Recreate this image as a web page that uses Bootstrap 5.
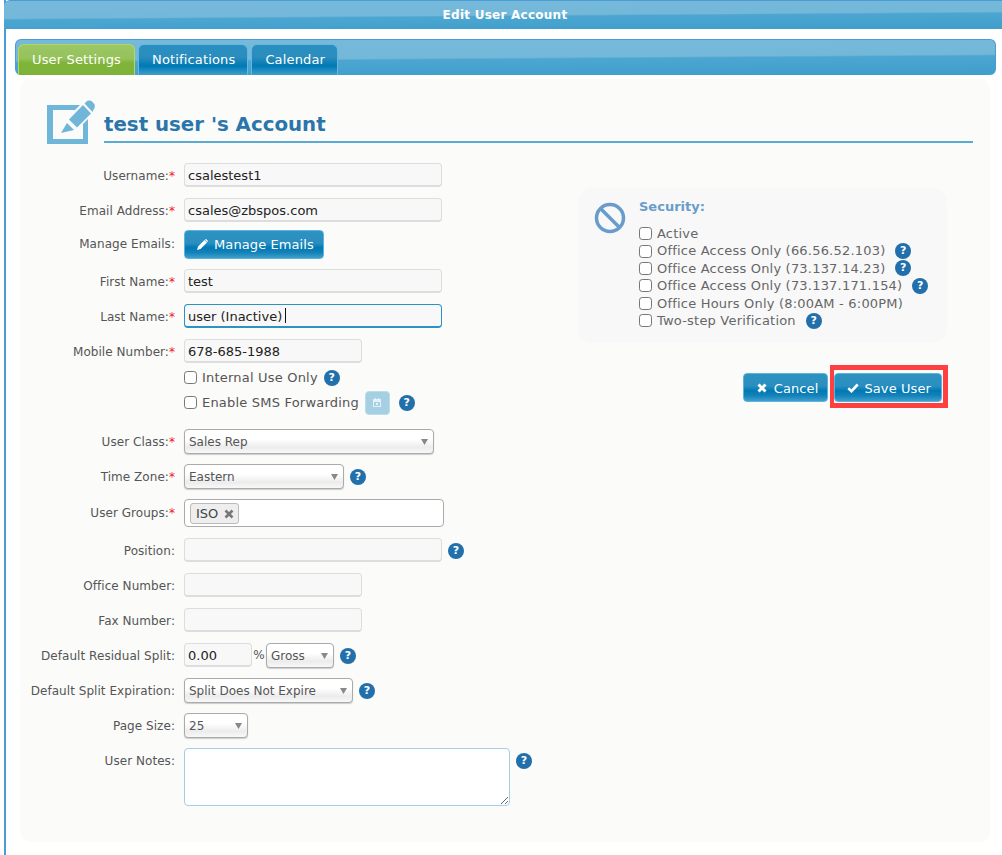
<!DOCTYPE html>
<html lang="en">

<head>
    <meta charset="UTF-8">
    <meta name="viewport" content="width=device-width, initial-scale=1.0">
    <title>Edit User Account</title>
    <link href="https://cdn.jsdelivr.net/npm/bootstrap@5.3.0/dist/css/bootstrap.min.css" rel="stylesheet">
    <style>
        body { font-family: "DejaVu Sans", Verdana, sans-serif; font-size: 12px; color: #555; background: #fff; overflow: hidden; }
        .page-frame { height: 855px; margin-left: 4px; border-left: 2px solid #4a9bd6; }
        .gloss-bar { background: linear-gradient(179.6deg, #76b9da 0, #74b8d9 50%, #4ca6d1 54%, #3f9ecb 100%); }
        .top-bar { height: 29px; margin-left: -2px; padding-left: 4px; border-top: 1px solid #4a9bd6; border-top-left-radius: 6px; color: #fff; font-weight: 700; font-size: 12px; letter-spacing: .25px; line-height: 28px; text-align: center; }
        .tab-bar { height: 36px; margin: 10px 6px 0 9px; border: 1px solid #4a9bd6; border-bottom: 0; border-radius: 6px; padding: 4px 0 0 2px; gap: 3px; }
        .tab-link { display: block; height: 31px; padding: 0 12px 0 13px; color: #fff; font-size: 13px; letter-spacing: .15px; line-height: 30px; border: 1px solid #62b8e2; border-bottom: 0; border-radius: 6px 6px 0 0; background: linear-gradient(#2a8fc0 0, #2a8dbe 40%, #0079b4 70%, #3f9fcc 100%); text-decoration: none; }
        .tab-link.is-current { padding: 0 13px; border-color: #b2d95c; background: linear-gradient(#9cc766 0, #95c25a 45%, #7fb439 60%, #7db338 100%); }
        .tab-link:hover { color: #fff; }
        .main-panel { height: 763px; margin: 4px 12px 0 14px; padding: 20px 17px 0 27px; background: #fbfbfa; border-radius: 10px; }
        .title-row { height: 45px; align-items: flex-end; }
        .title-row svg { flex: none; margin-right: 8px; }
        .title-text { flex: 1; height: 43px; margin: 0 0 1px; font-size: 19.8px; font-weight: 700; line-height: 49px; color: #2a76ab; border-bottom: 2px solid #5aabd3; }
        .form-cols { padding-top: 19px; margin-left: -27px; }
        .left-col { width: 558px; }
        .right-col { padding-top: 25px; }
        .field-row { display: flex; align-items: flex-start; margin-bottom: 11px; }
        .row-gap-8 { margin-bottom: 8px; }
        .row-gap-10 { margin-bottom: 10px; }
        .field-label { width: 155px; height: 24px; margin: 0 9px 0 0; text-align: right; letter-spacing: .05px; line-height: 26px; color: #555; white-space: nowrap; flex: none; }
        .label-tall { line-height: 28px; }
        .label-notes { line-height: 27px; }
        .req { color: #f0141e; }
        .text-box { height: 24px; padding: 1px 3px 0; font-size: 13px; color: #222; background: #f8f8f8; border: 1px solid #ddd; border-bottom-width: 2px; border-radius: 4px; }
        .text-box:focus { background: #f8f8f8; box-shadow: none; border-color: #ddd; }
        .text-box.is-active, .text-box.is-active:focus { border-color: #2a93c4; }
        .caret-wrap { position: relative; display: block; }
        .caret-mark { position: absolute; left: 101px; top: 4px; width: 1px; height: 15px; background: #111; }
        .w-258 { width: 258px; }
        .w-178 { width: 178px; }
        .w-68 { width: 68px; }
        .w-250 { width: 250px; }
        .w-160 { width: 160px; }
        .w-169 { width: 169px; }
        .w-64 { width: 64px; }
        .drop-box { height: 25px; padding: 0 16px 0 4px; font-size: 12px; color: #555; border: 1px solid #aaa; border-radius: 4px; box-shadow: 0 1px 1px #ccc; background-color: #fff; background-image: url("data:image/svg+xml,%3Csvg xmlns='http://www.w3.org/2000/svg' width='7' height='6'%3E%3Cpath d='M0 0h7L3.5 6z' fill='%23888'/%3E%3C/svg%3E"), linear-gradient(#fff 40%, #ececec 75%, #f8f8f8 100%); background-repeat: no-repeat; background-position: right 5px center, 0 0; background-size: 7px 6px, 100% 100%; }
        .drop-box:focus { border-color: #aaa; box-shadow: 0 1px 1px #ccc; }
        .help-dot { display: inline-block; flex: none; width: 16px; height: 16px; border-radius: 50%; background: #2270ab; color: #fff; font-size: 11px; font-weight: 700; line-height: 16px; text-align: center; }
        .help-gap { margin-left: 6px; }
        .help-gap-top { margin-left: 6px; margin-top: 5px; }
        .blue-btn { display: inline-flex; align-items: center; height: 29px; padding: 0 9px 0 12px; gap: 6px; color: #fff; font-size: 13px; letter-spacing: .1px; line-height: 1; border: 1px solid #5ab4dd; border-radius: 4px; background: linear-gradient(#2e92c1 0, #2a8ebf 45%, #0079b4 62%, #1482b9 80%, #3f9fcc 100%); }
        .blue-btn:hover { color: #fff; background: linear-gradient(#2e92c1 0, #2a8ebf 45%, #0079b4 62%, #1482b9 80%, #3f9fcc 100%); border-color: #5ab4dd; }
        .cancel-btn { padding-top: 1px; padding-left: 13px; gap: 7px; }
        .save-btn { padding-top: 1px; gap: 5px; padding-right: 10px; }
        .tick-box { width: 13px; height: 13px; margin: 0 5px 0 0; flex: none; border: 1px solid #767676; border-radius: 2.5px; float: none; }
        .tick-row { display: flex; align-items: center; font-size: 13px; letter-spacing: .2px; color: #555; }
        .under-fields { margin: -9px 0 14px 164px; }
        .under-fields .tick-row { height: 25px; }
        .sms-btn { display: inline-flex; align-items: center; justify-content: center; width: 25px; height: 24px; margin: 0 9px 0 6px; background: #a5cfe2; border: 1px solid #bcdcea; border-radius: 4px; }
        .percent-sign { width: 14px; line-height: 24px; text-align: center; }
        .group-box { width: 260px; height: 28px; padding: 3px 5px; background: #fff; border: 1px solid #aaa; border-radius: 4px; }
        .group-chip { display: inline-flex; align-items: center; height: 21px; padding: 0 4px 0 5px; gap: 6px; font-size: 13px; color: #444; background: #eee; border: 1px solid #bbb; border-radius: 3px; }
        .notes-box { width: 326px; height: 58px; background: #fff; border: 1px solid #a5cde6; border-radius: 4px; resize: both; }
        .notes-box:focus { border-color: #a5cde6; box-shadow: none; }
        .security-box { width: 369px; height: 155px; padding: 11px 0 0 16px; background: #f8f8f9; border-radius: 14px; }
        .security-box svg { flex: none; margin: 3px 13px 0 0; }
        .security-title { margin: 0 0 10px; font-size: 13px; font-weight: 700; line-height: 16px; color: #6a9ccb; }
        .security-list .tick-row { height: 17.5px; margin-top: -.1px; color: #666; }
        .security-list .help-dot { margin-left: 10px; }
        .action-row { width: 369px; padding: 30px 5px 0 0; gap: 6px; justify-content: flex-end; }
        .red-mark { position: relative; display: inline-flex; }
        .red-mark::after { content: ""; position: absolute; top: -8px; right: -6px; bottom: -6px; left: -4px; border: 5px solid #ff4040; border-left-width: 4px; pointer-events: none; }
    </style>
</head>

<body>
    <div class="page-frame">
        <div class="top-bar gloss-bar">Edit User Account</div>

        <div class="tab-bar gloss-bar d-flex">
            <a class="tab-link is-current" href="#">User Settings</a>
            <a class="tab-link" href="#">Notifications</a>
            <a class="tab-link" href="#">Calendar</a>
        </div>

        <div class="main-panel">
            <div class="title-row d-flex">
                <svg width="49" height="45" viewBox="0 0 49 45">
                    <path d="M0 6H33L28 11H6V40H36V25L41 20V45H0z" fill="#6fb6d8"/>
                    <path d="M14 34L20 24 27 31z" fill="#6fb6d8"/>
                    <path d="M22 20.500L36 6 44 14.500 30 28.500z" fill="#6fb6d8"/>
                    <path d="M37.500 4.500L39 3A4.500 4.500 0 0 1 45.500 3L46.500 4A4.500 4.500 0 0 1 46.500 10.500L45.500 13z" fill="#6fb6d8"/>
                </svg>
                <h2 class="title-text">test user 's Account</h2>
            </div>

            <form id="userForm" class="form-cols d-flex">
                <div class="left-col">
                    <div class="field-row">
                        <label class="field-label">Username:<span class="req">*</span></label>
                        <input type="text" class="form-control text-box w-258" value="csalestest1">
                    </div>
                    <div class="field-row row-gap-8">
                        <label class="field-label">Email Address:<span class="req">*</span></label>
                        <input type="text" class="form-control text-box w-258" value="csales@zbspos.com">
                    </div>
                    <div class="field-row row-gap-10">
                        <label class="field-label label-tall">Manage Emails:</label>
                        <button type="button" class="btn blue-btn">
                            <svg width="11" height="11" viewBox="0 0 11 11"><path d="M0 11l1-3.500L7.500 1 10 3.500 3.500 10zM8.300.4a1 1 0 0 1 1.300 0l1 1a1 1 0 0 1 0 1.300l-.4.400L7.900.8z" fill="#fff"/></svg>
                            Manage Emails
                        </button>
                    </div>
                    <div class="field-row">
                        <label class="field-label">First Name:<span class="req">*</span></label>
                        <input type="text" class="form-control text-box w-258" value="test">
                    </div>
                    <div class="field-row">
                        <label class="field-label">Last Name:<span class="req">*</span></label>
                        <span class="caret-wrap">
                            <input type="text" class="form-control text-box w-258 is-active" value="user (Inactive)">
                            <span class="caret-mark"></span>
                        </span>
                    </div>
                    <div class="field-row">
                        <label class="field-label">Mobile Number:<span class="req">*</span></label>
                        <input type="text" class="form-control text-box w-178" value="678-685-1988">
                    </div>
                    <div class="under-fields">
                        <div class="tick-row">
                            <input class="form-check-input tick-box" type="checkbox">
                            <span>Internal Use Only</span>
                            <span class="help-dot help-gap">?</span>
                        </div>
                        <div class="tick-row">
                            <input class="form-check-input tick-box" type="checkbox">
                            <span>Enable SMS Forwarding</span>
                            <span class="sms-btn">
                                <svg width="10" height="11" viewBox="0 0 10 11"><path d="M1 2h2V1h1v1h2V1h1v1h2v8H1zm1 3v4h6V5zm2 1h2v2H4z" fill="#e6f2f7" fill-rule="evenodd"/></svg>
                            </span>
                            <span class="help-dot">?</span>
                        </div>
                    </div>
                    <div class="field-row row-gap-10">
                        <label class="field-label">User Class:<span class="req">*</span></label>
                        <select class="form-select drop-box w-250"><option>Sales Rep</option></select>
                    </div>
                    <div class="field-row row-gap-10">
                        <label class="field-label">Time Zone:<span class="req">*</span></label>
                        <select class="form-select drop-box w-160"><option>Eastern</option></select>
                        <span class="help-dot help-gap-top">?</span>
                    </div>
                    <div class="field-row">
                        <label class="field-label label-tall">User Groups:<span class="req">*</span></label>
                        <div class="group-box d-flex">
                            <span class="group-chip">ISO
                                <svg width="10" height="10" viewBox="0 0 10 10"><path d="M1.500 1.500l7 7M8.500 1.500l-7 7" stroke="#777" stroke-width="2.600"/></svg>
                            </span>
                        </div>
                    </div>
                    <div class="field-row">
                        <label class="field-label">Position:</label>
                        <input type="text" class="form-control text-box w-258">
                        <span class="help-dot help-gap-top">?</span>
                    </div>
                    <div class="field-row">
                        <label class="field-label">Office Number:</label>
                        <input type="text" class="form-control text-box w-178">
                    </div>
                    <div class="field-row">
                        <label class="field-label">Fax Number:</label>
                        <input type="text" class="form-control text-box w-178">
                    </div>
                    <div class="field-row row-gap-10">
                        <label class="field-label">Default Residual Split:</label>
                        <input type="text" class="form-control text-box w-68" value="0.00">
                        <span class="percent-sign">%</span>
                        <select class="form-select drop-box w-68"><option>Gross</option></select>
                        <span class="help-dot help-gap-top">?</span>
                    </div>
                    <div class="field-row row-gap-10">
                        <label class="field-label">Default Split Expiration:</label>
                        <select class="form-select drop-box w-169"><option>Split Does Not Expire</option></select>
                        <span class="help-dot help-gap-top">?</span>
                    </div>
                    <div class="field-row row-gap-10">
                        <label class="field-label">Page Size:</label>
                        <select class="form-select drop-box w-64"><option>25</option></select>
                    </div>
                    <div class="field-row">
                        <label class="field-label label-notes">User Notes:</label>
                        <textarea class="form-control notes-box"></textarea>
                        <span class="help-dot help-gap-top">?</span>
                    </div>
                </div>

                <div class="right-col">
                    <div class="security-box d-flex">
                        <svg width="32" height="32" viewBox="0 0 32 32"><circle cx="16" cy="16" r="13.500" fill="none" stroke="#6a9ccb" stroke-width="3.500"/><path d="M6.500 6.500l19 19" stroke="#6a9ccb" stroke-width="3.500"/></svg>
                        <div class="security-list">
                            <div class="security-title">Security:</div>
                            <div class="tick-row"><input class="form-check-input tick-box" type="checkbox"><span>Active</span></div>
                            <div class="tick-row"><input class="form-check-input tick-box" type="checkbox"><span>Office Access Only (66.56.52.103)</span><span class="help-dot">?</span></div>
                            <div class="tick-row"><input class="form-check-input tick-box" type="checkbox"><span>Office Access Only (73.137.14.23)</span><span class="help-dot">?</span></div>
                            <div class="tick-row"><input class="form-check-input tick-box" type="checkbox"><span>Office Access Only (73.137.171.154)</span><span class="help-dot">?</span></div>
                            <div class="tick-row"><input class="form-check-input tick-box" type="checkbox"><span>Office Hours Only (8:00AM - 6:00PM)</span></div>
                            <div class="tick-row"><input class="form-check-input tick-box" type="checkbox"><span>Two-step Verification</span><span class="help-dot">?</span></div>
                        </div>
                    </div>
                    <div class="action-row d-flex">
                        <button type="button" class="btn blue-btn cancel-btn">
                            <svg width="10" height="10" viewBox="0 0 10 10"><path d="M1.500 1.500l7 7M8.500 1.500l-7 7" stroke="#fff" stroke-width="3"/></svg>
                            Cancel
                        </button>
                        <span class="red-mark">
                            <button type="submit" class="btn blue-btn save-btn">
                                <svg width="12" height="10" viewBox="0 0 12 10"><path d="M1.300 5.200l3.200 3L10.700 1.500" fill="none" stroke="#fff" stroke-width="2.600"/></svg>
                                Save User
                            </button>
                        </span>
                    </div>
                </div>
            </form>
        </div>
    </div>

    <script src="https://cdn.jsdelivr.net/npm/bootstrap@5.3.0/dist/js/bootstrap.bundle.min.js"></script>
</body>

</html>
